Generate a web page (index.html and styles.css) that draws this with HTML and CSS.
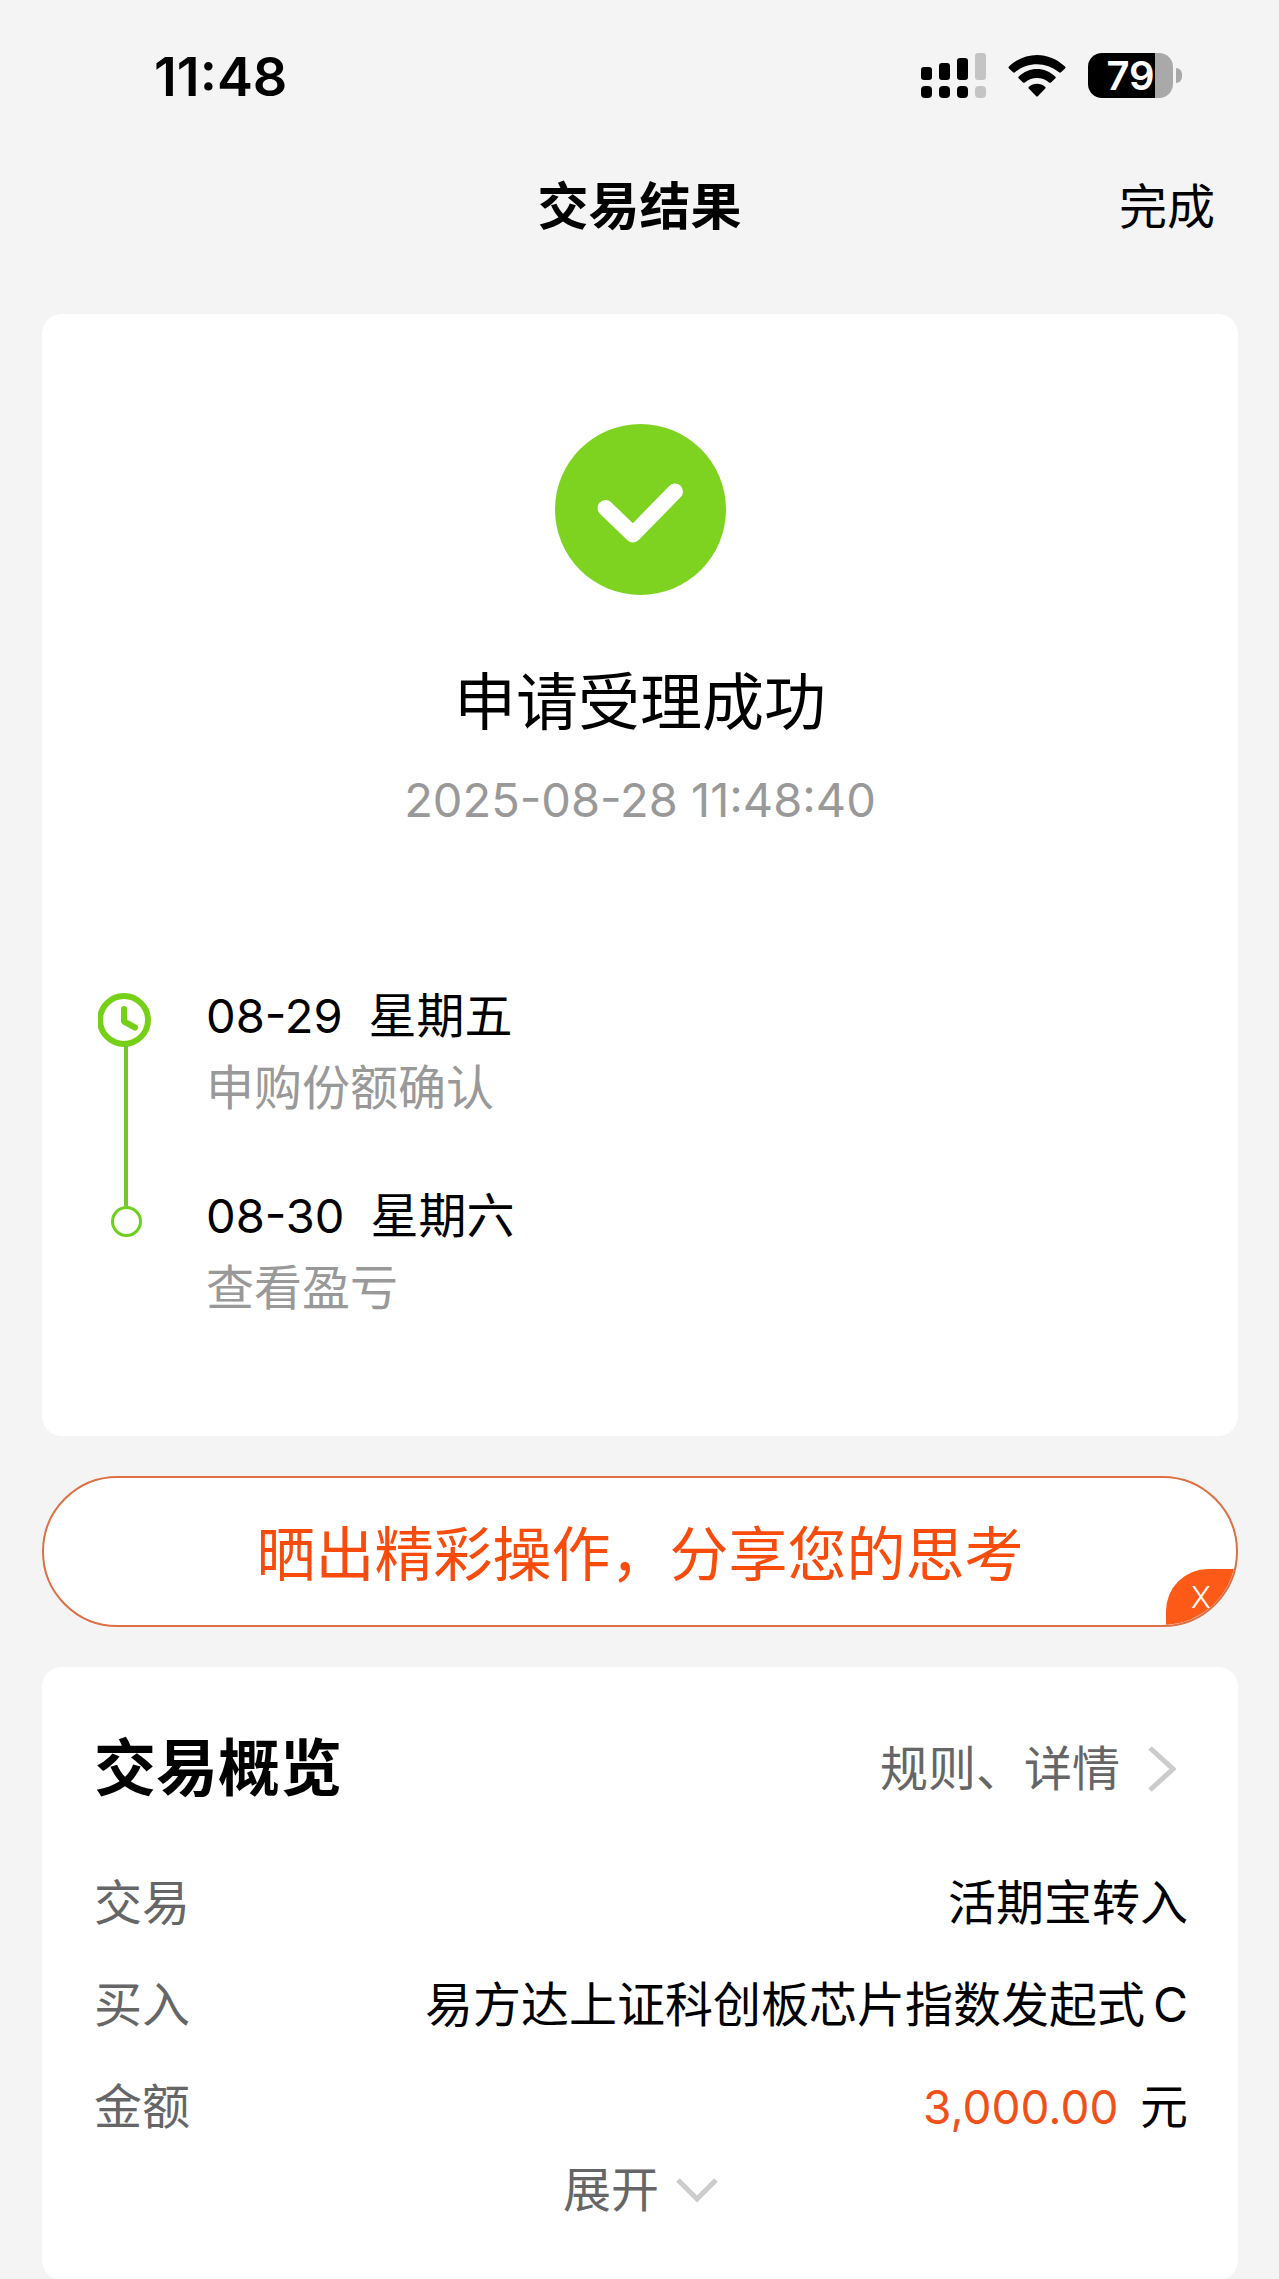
FILE: index.html
```html
<!DOCTYPE html>
<html lang="zh-CN">
<head>
<meta charset="UTF-8">
<meta name="viewport" content="width=device-width, initial-scale=1.0">
<title>交易结果</title>
<link rel="stylesheet" href="styles.css">
</head>
<body>
<div class="status-bar">
  <span class="time">11:48</span>
  <div class="status-icons">
    <svg class="signal" viewBox="0 0 65 45">
      <rect x="0" y="14" width="11" height="13" rx="3"/>
      <rect x="18" y="10" width="11" height="17" rx="3"/>
      <rect x="36" y="5" width="11" height="22" rx="3"/>
      <rect class="off" x="54" y="0" width="11" height="27" rx="3"/>
      <rect x="0" y="33" width="11" height="12" rx="4"/>
      <rect x="18" y="33" width="11" height="12" rx="4"/>
      <rect x="36" y="33" width="11" height="12" rx="4"/>
      <rect class="off" x="54" y="33" width="11" height="12" rx="4"/>
    </svg>
    <svg class="wifi" viewBox="0 0 58 43">
      <path d="M1 12.500Q0 13.500 1 14.500L5 18.300Q6 19 7 18.200C20 7.500 38 7.500 51 18.200Q52 19 53 18.300L57 14.500Q58 13.500 57 12.500C41-3 17-3 1 12.500Z"/>
      <path d="M10.500 22.800Q9.800 23.600 10.600 24.300L15 28.400Q15.900 29.100 16.900 28.400C24 22.600 34 22.600 41.100 28.400Q42.100 29.100 43 28.400L47.400 24.300Q48.200 23.600 47.500 22.800C37 12.400 21 12.400 10.500 22.800Z"/>
      <path d="M20.700 33Q20 33.800 20.700 34.500L28 42Q29 43 30 42L37.300 34.500Q38 33.800 37.300 33C32.500 28.700 25.500 28.700 20.700 33Z"/>
    </svg>
    <div class="battery"><span class="level">79</span></div>
  </div>
</div>

<header class="nav">
  <h1>交易结果</h1>
  <button type="button" class="done">完成</button>
</header>

<main>
  <section class="card result">
    <svg class="success" viewBox="0 0 171 171">
      <circle cx="85.500" cy="85.500" r="85.500"/>
      <path d="M50.500 84L78 110.500L120 67.500"/>
    </svg>
    <h2>申请受理成功</h2>
    <p class="result-time">2025-08-28 11:48:40</p>

    <ol class="timeline">
      <li>
        <div class="marker">
          <svg class="clock" viewBox="0 0 56 56">
            <circle cx="26" cy="28" r="24"/>
            <path d="M26 17V29.500L37 35.500"/>
          </svg>
          <span class="line"></span>
        </div>
        <div class="step">
          <p class="step-date"><span class="day">08-29</span><span>星期五</span></p>
          <p class="step-text">申购份额确认</p>
        </div>
      </li>
      <li>
        <div class="marker last"><span class="line"></span><span class="dot"></span></div>
        <div class="step">
          <p class="step-date"><span class="day">08-30</span><span>星期六</span></p>
          <p class="step-text">查看盈亏</p>
        </div>
      </li>
    </ol>
  </section>

  <div class="share">
    <a href="#">晒出精彩操作，分享您的思考</a>
    <button type="button" class="share-close">X</button>
  </div>

  <section class="card overview">
    <div class="overview-head">
      <h2>交易概览</h2>
      <a href="#">规则、详情
        <svg class="arrow" viewBox="0 0 28 46"><path d="M2 2L25 23L2 44"/></svg>
      </a>
    </div>
    <table>
      <tr><th scope="row">交易</th><td>活期宝转入</td></tr>
      <tr><th scope="row">买入</th><td>易方达上证科创板芯片指数发起式<span class="share-class">C</span></td></tr>
      <tr><th scope="row">金额</th><td><span class="amount">3,000.00</span> 元</td></tr>
    </table>
    <button type="button" class="expand">展开
      <svg class="arrow-down" viewBox="0 0 44 26"><path d="M3 3L22 22L41 3"/></svg>
    </button>
  </section>
</main>
</body>
</html>
```

FILE: styles.css
```css
* {
  box-sizing: border-box;
}
body {
  margin: 0;
  background-color: #f4f4f4;
  color: #000;
  font-family: Inter, "Noto Sans CJK SC", sans-serif;
  font-size: 48px;
  line-height: 72px;
}
h1, h2, p, ol {
  margin: 0;
  padding: 0;
}
button {
  padding: 0;
  border: none;
  background: none;
  color: inherit;
  font: inherit;
  cursor: pointer;
}
a {
  color: inherit;
  text-decoration: none;
}
svg {
  display: block;
}

/* 状态栏 */
.status-bar {
  display: flex;
  justify-content: space-between;
  align-items: center;
  height: 150px;
  padding: 0 106px 0 154px;
}
.time {
  padding-top: 4px;
  font-size: 54px;
  font-weight: 600;
}
.status-icons {
  display: flex;
  align-items: center;
  gap: 22px;
}
.signal {
  width: 65px;
  height: 45px;
}
.signal .off {
  fill: #c4c4c4;
}
.wifi {
  width: 58px;
  height: 43px;
}
.battery {
  position: relative;
  width: 85px;
  height: 45px;
  border-radius: 14px;
  background: linear-gradient(to right, #000 79%, #a9a9a9 79%);
  color: #fff;
  text-align: center;
}
.battery::after {
  content: "";
  position: absolute;
  top: 15px;
  right: -9px;
  width: 6px;
  height: 15px;
  border-radius: 0 6px 6px 0;
  background-color: #a9a9a9;
}
.level {
  display: block;
  font-size: 40px;
  font-weight: 600;
  line-height: 45px;
}

/* 标题栏 */
.nav {
  display: grid;
  grid-template-columns: 1fr auto 1fr;
  align-items: center;
  height: 108px;
  padding: 6px 64px 0;
}
.nav h1 {
  grid-column: 2;
  font-size: 51px;
  font-weight: 600;
}
.done {
  justify-self: end;
}

main {
  display: flex;
  flex-direction: column;
  gap: 40px;
  padding: 56px 41px 0 42px;
}
.card {
  border-radius: 20px;
  background-color: #fff;
}

/* 受理结果 */
.result {
  padding: 110px 52px 112px;
}
.success {
  width: 171px;
  height: 171px;
  margin: 0 auto 63px;
}
.success circle {
  fill: #7ed321;
}
.success path {
  fill: none;
  stroke: #fff;
  stroke-width: 16;
  stroke-linecap: round;
  stroke-linejoin: round;
}
.result h2 {
  font-size: 62px;
  font-weight: 400;
  line-height: 90px;
  text-align: center;
}
.result-time {
  margin-top: 16px;
  color: #999;
  font-size: 47px;
  text-align: center;
}
.timeline {
  margin-top: 144px;
  list-style: none;
}
.timeline li {
  display: flex;
  gap: 48px;
}
.marker {
  display: flex;
  flex-direction: column;
  align-items: center;
  width: 64px;
  padding-top: 12px;
}
.marker.last {
  padding-top: 0;
}
.clock {
  flex: none;
  width: 56px;
  height: 56px;
}
.clock circle, .clock path {
  fill: none;
  stroke: #76d017;
  stroke-width: 6;
  stroke-linecap: round;
  stroke-linejoin: round;
}
.line {
  flex: 1;
  width: 4px;
  margin-top: -2px;
  background-color: #6fc92a;
}
.last .line {
  flex: none;
  height: 28px;
}
.dot {
  width: 31px;
  height: 31px;
  border: 3px solid #6fcf1f;
  border-radius: 50%;
}
.timeline li:first-child .step {
  padding-bottom: 56px;
}
.step-date {
  display: flex;
  gap: 26px;
}
.day {
  font-size: 47px;
}
.step-text {
  color: #999;
}

/* 分享条 */
.share {
  position: relative;
  overflow: hidden;
  padding-top: 6px;
  border: 2px solid #dd7044;
  border-radius: 76px;
  background-color: #fff;
  color: #f94c0c;
  font-size: 59px;
  line-height: 141px;
  text-align: center;
}
.share a {
  display: block;
}
.share-close {
  position: absolute;
  right: 0;
  bottom: 0;
  width: 70px;
  height: 56px;
  border-radius: 42px 0 0 0;
  background-color: #fc5a16;
  color: #fff;
  font-size: 30px;
  font-weight: 300;
  line-height: 56px;
}

/* 交易概览 */
.overview {
  padding: 57px 50px 58px 52px;
}
.overview-head {
  display: flex;
  justify-content: space-between;
  align-items: center;
  line-height: 90px;
}
.overview-head h2 {
  font-size: 62px;
  font-weight: 600;
}
.overview-head a {
  display: flex;
  align-items: center;
  gap: 28px;
  padding-right: 12px;
  color: #666;
}
.arrow {
  width: 28px;
  height: 46px;
}
.arrow-down {
  width: 44px;
  height: 26px;
}
.arrow path, .arrow-down path {
  fill: none;
  stroke: #ccc;
  stroke-width: 5;
}
.overview table {
  width: 100%;
  margin-top: 38px;
  border-collapse: collapse;
}
.overview th, .overview td {
  height: 102px;
  padding: 0;
  font-weight: 400;
}
.overview th {
  color: #666;
  text-align: left;
}
.overview td {
  text-align: right;
}
.share-class {
  margin-left: 8px;
}
.amount {
  margin-right: 8px;
  color: #f0501a;
  font-size: 46px;
}
.expand {
  display: flex;
  align-items: center;
  gap: 16px;
  margin: 0 auto;
  color: #666;
  line-height: 64px;
}
```
